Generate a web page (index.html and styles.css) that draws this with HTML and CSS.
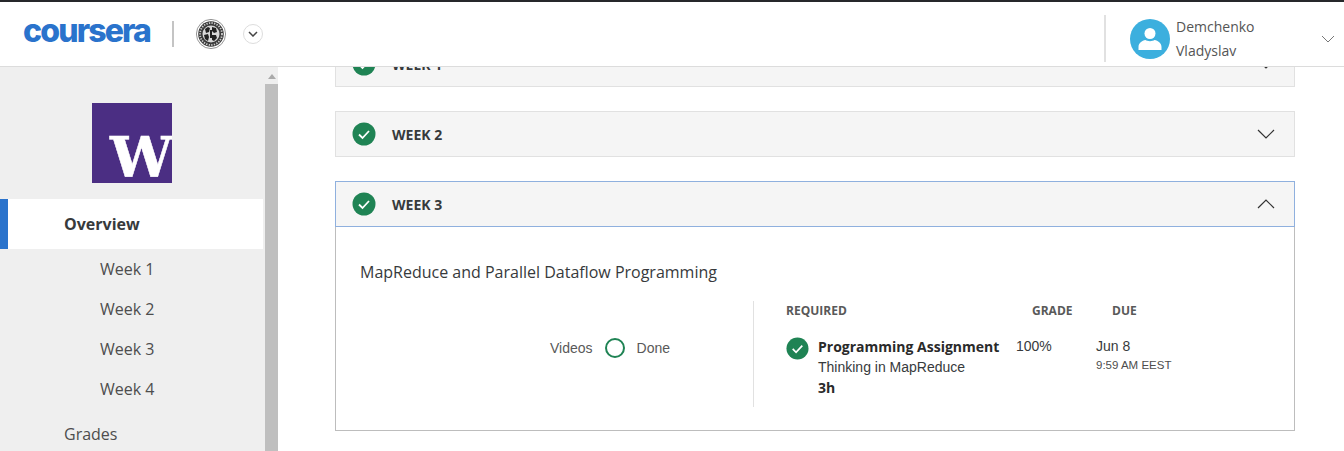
FILE: index.html
```html
<!DOCTYPE html>
<html lang="en">
<head>
<meta charset="utf-8">
<title>Coursera - Week 3</title>
<link rel="stylesheet" href="styles.css">
</head>
<body>
<header class="topbar">
  <div class="brand">
    <span class="wordmark">coursera</span>
    <span class="pipe"></span>
    <svg class="crest" width="30" height="30" viewBox="0 0 30 30">
      <circle cx="15" cy="15" r="14.6" fill="#fff" stroke="#666" stroke-width="0.7"/>
      <circle cx="15" cy="15" r="12.800" fill="#3a3a3a"/>
      <circle cx="15" cy="15" r="11" fill="none" stroke="#ccc" stroke-width="1.800" stroke-dasharray="1.300 1.300"/>
      <circle cx="15" cy="15" r="8.500" fill="#d8d8d8"/>
      <path d="M9 10l3-2 2 1-1 4-3 1zM16 8l4 1 1 4-3 1-2-2zM8 16l4-1 1 3-1 4-3-2zM16 16l4 0 1 3-3 3-2-1zM14 11h2v8h-2z" fill="#222"/>
    </svg>
    <span class="round-chevron">
      <svg width="10" height="6" viewBox="0 0 10 6"><path d="M1 1l4 4 4-4" fill="none" stroke="#444" stroke-width="1.500"/></svg>
    </span>
  </div>
  <div class="account">
    <svg class="avatar" width="40" height="40" viewBox="0 0 40 40">
      <circle cx="20" cy="20" r="20" fill="#3cafde"/>
      <circle cx="20" cy="14.500" r="5.500" fill="#fff"/>
      <path d="M8.500 31v-3c0-4 3.500-6.500 7-7 1.500 1.500 7.500 1.500 9 0 3.500.5 7 3 7 7v3z" fill="#fff"/>
    </svg>
    <div class="account-name"><span>Demchenko</span><span>Vladyslav</span></div>
    <svg class="account-chevron" width="14" height="8" viewBox="0 0 14 8"><path d="M1 1l6 6 6-6" fill="none" stroke="#777" stroke-width="1"/></svg>
  </div>
</header>
<div class="page">
  <aside class="sidebar">
    <div class="uw-logo"><span>W</span></div>
    <nav class="nav">
      <a class="nav-top active">Overview</a>
      <a class="nav-sub">Week 1</a>
      <a class="nav-sub">Week 2</a>
      <a class="nav-sub">Week 3</a>
      <a class="nav-sub">Week 4</a>
      <a class="nav-top grades">Grades</a>
    </nav>
  </aside>
  <div class="scrollbar"><span class="scroll-arrow"></span><span class="scroll-thumb"></span></div>
  <main class="main">
    <section class="week first">
      <div class="week-head">
        <svg class="check" width="24" height="24" viewBox="0 0 24 24"><circle cx="12" cy="12" r="11.500" fill="#1f8354"/><path d="M7 12.500l3.500 3.500L17 9" fill="none" stroke="#fff" stroke-width="1.800"/></svg>
        <span class="week-title">WEEK 1</span>
        <svg class="chev" width="18" height="10" viewBox="0 0 18 10"><path d="M1 1l8 8 8-8" fill="none" stroke="#333" stroke-width="1.200"/></svg>
      </div>
    </section>
    <section class="week">
      <div class="week-head">
        <svg class="check" width="24" height="24" viewBox="0 0 24 24"><circle cx="12" cy="12" r="11.500" fill="#1f8354"/><path d="M7 12.500l3.500 3.500L17 9" fill="none" stroke="#fff" stroke-width="1.800"/></svg>
        <span class="week-title">WEEK 2</span>
        <svg class="chev" width="18" height="10" viewBox="0 0 18 10"><path d="M1 1l8 8 8-8" fill="none" stroke="#333" stroke-width="1.200"/></svg>
      </div>
    </section>
    <section class="week open">
      <div class="week-head">
        <svg class="check" width="24" height="24" viewBox="0 0 24 24"><circle cx="12" cy="12" r="11.500" fill="#1f8354"/><path d="M7 12.500l3.500 3.500L17 9" fill="none" stroke="#fff" stroke-width="1.800"/></svg>
        <span class="week-title">WEEK 3</span>
        <svg class="chev" width="18" height="10" viewBox="0 0 18 10"><path d="M1 9l8-8 8 8" fill="none" stroke="#333" stroke-width="1.200"/></svg>
      </div>
      <div class="week-body">
        <h2 class="week-heading">MapReduce and Parallel Dataflow Programming</h2>
        <div class="columns">
          <div class="progress">
            <span>Videos</span>
            <span class="ring"></span>
            <span>Done</span>
          </div>
          <div class="required">
            <div class="req-head">
              <span class="col-req">REQUIRED</span>
              <span class="col-grade">GRADE</span>
              <span>DUE</span>
            </div>
            <div class="req-row">
              <svg class="check-small" width="23" height="23" viewBox="0 0 24 24"><circle cx="12" cy="12" r="11.500" fill="#1f8354"/><path d="M7 12.500l3.500 3.500L17 9" fill="none" stroke="#fff" stroke-width="1.800"/></svg>
              <div class="req-name">
                <strong>Programming Assignment</strong>
                <span>Thinking in MapReduce</span>
                <strong class="req-time">3h</strong>
              </div>
              <div class="req-grade">100%</div>
              <div class="req-due"><span>Jun 8</span><small>9:59 AM EEST</small></div>
            </div>
          </div>
        </div>
      </div>
    </section>
  </main>
</div>
</body>
</html>
```
FILE: styles.css
```css
* { box-sizing: border-box; }
html, body { margin: 0; height: 100%; overflow: hidden; }
body {
  background: #fff;
  color: #333;
  font-family: "Open Sans", "Liberation Sans", sans-serif;
}
.topbar {
  height: 67px;
  border-top: 2px solid #26282b;
  border-bottom: 1px solid #dcdcdc;
  display: flex;
  justify-content: space-between;
  background: #fff;
  position: relative;
  z-index: 2;
}
.brand {
  display: flex;
  align-items: center;
  padding-left: 23px;
  height: 64px;
}
.wordmark {
  font-family: "Inter", "Liberation Sans", sans-serif;
  font-weight: 800;
  font-size: 32px;
  letter-spacing: -1.85px;
  color: #2a73cc;
  width: 149px;
  line-height: 1;
  position: relative;
  top: -3px;
}
.pipe {
  width: 2px;
  height: 26px;
  background: #c4c4c4;
}
.crest { margin-left: 22px; }
.round-chevron {
  margin-left: 17px;
  width: 20px;
  height: 20px;
  border: 1px solid #ddd;
  border-radius: 50%;
  display: flex;
  align-items: center;
  justify-content: center;
}
.account {
  width: 240px;
  display: flex;
  align-items: center;
  position: relative;
  height: 47px;
  margin-top: 13px;
  border-left: 2px solid #e1e1e1;
  padding: 1px 0 0 24px;
}
.avatar { flex: none; margin-top: 0; }
.account-name {
  display: flex;
  flex-direction: column;
  margin-left: 6px;
  font-size: 14px;
  line-height: 24px;
  color: #555;
}
.account-chevron { margin-left: auto; margin-right: 9px; }
.page {
  display: flex;
  height: 384px;
  overflow: hidden;
}
.sidebar {
  width: 265px;
  flex: none;
  background: #efefef;
  overflow: hidden;
}
.uw-logo {
  width: 80px;
  height: 80px;
  margin: 36px 0 16px 92px;
  background: #4b2e83;
  overflow: hidden;
  display: flex;
  align-items: flex-end;
  padding: 0 0 0 18px;
}
.uw-logo span {
  font-family: "DejaVu Serif", serif;
  font-weight: 700;
  font-size: 56px;
  line-height: 1;
  color: #fff;
  margin-bottom: -2px;
  -webkit-text-stroke: 0.5px #fff;
}
.nav { display: flex; flex-direction: column; }
.nav a { display: block; color: #4d4d4d; font-size: 16px; }
.nav-top { padding-left: 64px; }
.nav-sub { padding-left: 100px; line-height: 40px; height: 40px; }
.nav .active {
  width: 263px;
  height: 50px;
  line-height: 50px;
  background: #fff;
  border-left: 8px solid #2a73cc;
  padding-left: 56px;
  color: #373a3c;
  font-weight: 700;
}
.nav .grades { line-height: 40px; margin-top: 5px; }
.scrollbar {
  width: 13px;
  flex: none;
  display: flex;
  flex-direction: column;
  align-items: center;
  background: #efefef;
}
.scroll-arrow {
  margin-top: 7px;
  width: 0;
  height: 0;
  border-left: 4px solid transparent;
  border-right: 4px solid transparent;
  border-bottom: 5px solid #aaa;
}
.scroll-thumb {
  margin-top: 5px;
  width: 13px;
  flex: 1;
  background: #bfbfbf;
}
.main {
  flex: 1;
  padding-left: 57px;
  margin-top: -26px;
}
.week {
  width: 960px;
  margin-bottom: 25px;
}
.week.first { margin-bottom: 24px; }
.week-head {
  height: 46px;
  display: flex;
  align-items: center;
  background: #f5f5f5;
  border: 1px solid #e1e1e1;
  padding: 0 19px 0 16px;
}
.week-title {
  margin-left: 16px;
  font-size: 14px;
  font-weight: 700;
  color: #373a3c;
}
.chev { margin-left: auto; }
.open { border: 1px solid #bdbdbd; height: 250px; margin: -1px 0 0; }
.open .week-head {
  border: 1px solid #8fb0de;
  margin: -1px -1px 0;
}
.week-body { padding: 0 0 0 24px; }
.week-heading {
  margin: 33px 0 17px;
  font-size: 16px;
  font-weight: 400;
  line-height: 24px;
  color: #373a3c;
}
.columns { display: flex; height: 106px; }
.progress {
  width: 394px;
  flex: none;
  display: flex;
  align-items: center;
  justify-content: flex-end;
  padding-right: 83px;
  padding-bottom: 13px;
  border-right: 1px solid #e1e1e1;
  font-family: "Liberation Sans", Arial, sans-serif;
  font-size: 14px;
  color: #595959;
}
.ring {
  width: 20px;
  height: 20px;
  border: 2px solid #1f8354;
  border-radius: 50%;
  margin: 0 12px;
}
.required { padding-left: 32px; flex: 1; }
.req-head {
  display: flex;
  font-size: 12px;
  font-weight: 700;
  color: #595959;
  line-height: 18px;
  margin-top: 1px;
}
.col-req { width: 246px; }
.col-grade { width: 80px; }
.req-row { display: flex; margin-top: 17px; }
.check-small { flex: none; margin-right: 9px; }
.req-name { width: 198px; display: flex; flex-direction: column; font-family: "Liberation Sans", Arial, sans-serif; font-size: 14px; line-height: 20px; color: #373a3c; }
.req-name strong { font-family: "Open Sans", sans-serif; font-weight: 700; color: #2a2a2a; font-size: 14px; }
.req-name .req-time { margin-top: 1px; }
.req-grade { width: 80px; margin-top: -1px; font-family: "Liberation Sans", Arial, sans-serif; font-size: 14px; line-height: 20px; color: #373a3c; }
.req-due { display: flex; flex-direction: column; margin-top: -1px; font-family: "Liberation Sans", Arial, sans-serif; font-size: 14px; line-height: 20px; color: #373a3c; }
.req-due small { font-size: 11.5px; line-height: 16px; margin-top: 1px; color: #4d4d4d; }
```
